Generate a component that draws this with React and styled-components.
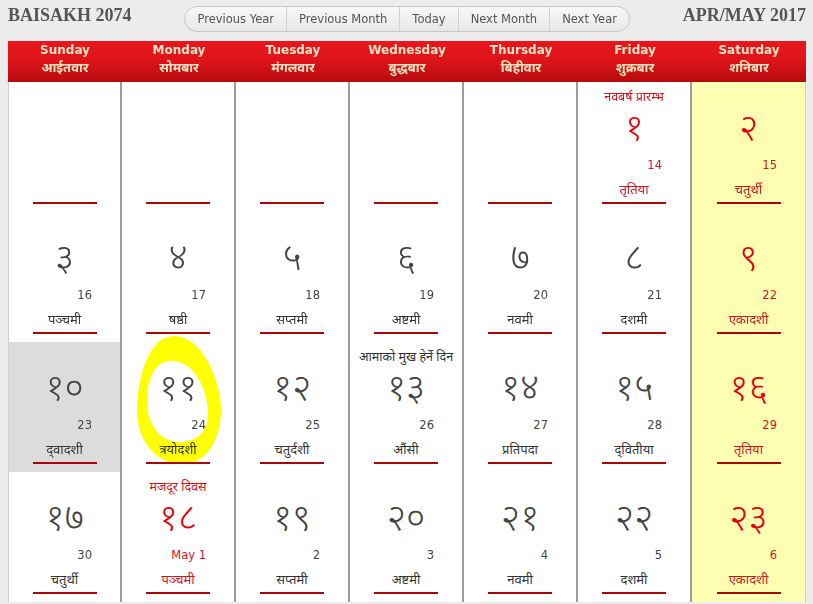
import React from 'react';
import styled, { createGlobalStyle } from 'styled-components';

const DEV = `"Noto Sans Devanagari", "Lohit Devanagari", "Mangal", "Noto Sans", sans-serif`;
const RED = '#e3000b';
const RED_TEXT = '#d0151b';

const Global = createGlobalStyle`
  html, body { margin: 0; padding: 0; background: #ececec; overflow: hidden; }
  body { font-family: "DejaVu Sans", sans-serif; }
`;

const Page = styled.div`
  width: 798px;
  margin-left: 8px;
`;

const TopBar = styled.div`
  height: 41px;
  display: flex;
  justify-content: space-between;
  align-items: flex-start;
`;

const Title = styled.h1`
  margin: 5px 0 0;
  font: bold 18px/20px "Liberation Serif", serif;
  color: #555;
`;

const BtnGroup = styled.div`
  margin-top: 6px;
  display: flex;
  height: 26px;
  box-sizing: border-box;
  border: 1px solid #c6c6c6;
  border-radius: 13px;
  overflow: hidden;
  background: linear-gradient(#f8f8f8, #e8e8e8);
`;

const NavBtn = styled.button`
  border: 0;
  border-left: 1px solid #cfcfcf;
  background: transparent;
  padding: 1px 12px 0;
  font: 11.5px/23px "DejaVu Sans", sans-serif;
  color: #555;
  cursor: pointer;
  &:first-child { border-left: 0; }
`;

const Table = styled.div`
  display: grid;
  grid-template-columns: repeat(7, 114px);
`;

const Head = styled.div`
  background: linear-gradient(#e8161d 0%, #e0141b 45%, #b60a0e 100%);
  height: 41px;
  box-sizing: border-box;
  padding-top: 2px;
  text-align: center;
  color: #fbe4bf;
  font-weight: bold;
`;

const HeadEn = styled.div`
  font: bold 12px/15px "DejaVu Sans", sans-serif;
`;

const HeadNp = styled.div`
  font: bold 13px/21px ${DEV};
`;

const Cell = styled.div`
  position: relative;
  height: 130px;
  box-sizing: border-box;
  display: flex;
  flex-direction: column;
  align-items: center;
  background: ${p => (p.$sat ? '#ffffb4' : p.$today ? '#dcdcdc' : '#ffffff')};
  border-right: 2px solid #9c9c9c;
  border-left: ${p => (p.$first ? '1px solid #cfcfcf' : '0')};
  &:nth-child(7n) { border-right: 1px solid #cfcfcf; }
`;

const Event = styled.div`
  margin-top: 8px;
  height: 16px;
  font: 12.5px/16px ${DEV};
  color: ${p => (p.$red ? RED_TEXT : '#333')};
  white-space: nowrap;
`;

const Num = styled.div`
  margin-top: 4px;
  height: 42px;
  font: 350 37px/42px ${DEV};
  color: ${p => (p.$red ? RED : '#444')};
`;

const EnDate = styled.div`
  align-self: stretch;
  margin-top: 5px;
  padding-right: 28px;
  text-align: right;
  height: 16px;
  font: 11.5px/16px "DejaVu Sans", sans-serif;
  color: ${p => (p.$red ? RED_TEXT : '#444')};
`;

const Tithi = styled.div`
  margin-top: 9px;
  height: 17px;
  font: 13px/17px ${DEV};
  color: ${p => (p.$red ? RED_TEXT : '#333')};
  white-space: nowrap;
`;

const Rule = styled.div`
  margin-top: 3px;
  width: 64px;
  height: 2px;
  background: #a80808;
`;

const Spacer = styled.div`
  flex: 1;
`;

const Circle = styled.svg`
  position: absolute;
  left: 0;
  top: 0;
  overflow: visible;
  mix-blend-mode: multiply;
  pointer-events: none;
`;

const days = [
  ['Sunday', 'आईतवार'],
  ['Monday', 'सोमबार'],
  ['Tuesday', 'मंगलवार'],
  ['Wednesday', 'बुद्धबार'],
  ['Thursday', 'बिहीवार'],
  ['Friday', 'शुक्रबार'],
  ['Saturday', 'शनिबार'],
];

const weeks = [
  [null, null, null, null, null,
    { n: '१', d: '14', t: 'तृतिया', ev: 'नवबर्ष प्रारम्भ', red: true },
    { n: '२', d: '15', t: 'चतुर्थी' }],
  [{ n: '३', d: '16', t: 'पञ्चमी' }, { n: '४', d: '17', t: 'षष्ठी' }, { n: '५', d: '18', t: 'सप्तमी' },
    { n: '६', d: '19', t: 'अष्टमी' }, { n: '७', d: '20', t: 'नवमी' }, { n: '८', d: '21', t: 'दशमी' },
    { n: '९', d: '22', t: 'एकादशी' }],
  [{ n: '१०', d: '23', t: 'द्\u200Cवादशी', today: true }, { n: '११', d: '24', t: 'त्रयोदशी', circled: true },
    { n: '१२', d: '25', t: 'चतुर्दशी' }, { n: '१३', d: '26', t: 'औंसी', ev: 'आमाको मुख हेर्ने दिन' },
    { n: '१४', d: '27', t: 'प्रतिपदा' }, { n: '१५', d: '28', t: 'द्\u200Cवितीया' }, { n: '१६', d: '29', t: 'तृतिया' }],
  [{ n: '१७', d: '30', t: 'चतुर्थी' }, { n: '१८', d: 'May 1', t: 'पञ्चमी', ev: 'मजदूर दिवस', red: true },
    { n: '१९', d: '2', t: 'सप्तमी' }, { n: '२०', d: '3', t: 'अष्टमी' }, { n: '२१', d: '4', t: 'नवमी' },
    { n: '२२', d: '5', t: 'दशमी' }, { n: '२३', d: '6', t: 'एकादशी' }],
];

function Highlight() {
  return (
    <Circle width="114" height="130" viewBox="0 0 114 130">
      <path
        fillRule="evenodd"
        fill="#ffff00"
        d="M 51 -6 C 75 -7, 93 25, 98 55 C 103 90, 88 121, 62 122 C 35 123, 15 100, 15 68 C 15 35, 27 -5, 51 -6 Z
           M 48 19 C 70 17, 86 45, 86 72 C 86 92, 72 101, 55 100 C 38 99, 25 82, 25 60 C 25 38, 32 20, 48 19 Z"
      />
    </Circle>
  );
}

function DayCell({ day, col }) {
  const sat = col === 6;
  if (!day) {
    return (
      <Cell $sat={sat} $first={col === 0}>
        <Spacer />
        <Rule style={{ marginBottom: 8 }} />
      </Cell>
    );
  }
  const red = sat || day.red;
  return (
    <Cell $sat={sat} $today={day.today} $first={col === 0}>
      <Event $red={red}>{day.ev || ''}</Event>
      <Num $red={red}>{day.n}</Num>
      <EnDate $red={red}>{day.d}</EnDate>
      <Tithi $red={red}>{day.t}</Tithi>
      <Rule />
      {day.circled && <Highlight />}
    </Cell>
  );
}

export default function App() {
  return (
    <>
      <Global />
      <Page>
        <TopBar>
          <Title>BAISAKH 2074</Title>
          <BtnGroup>
            <NavBtn>Previous Year</NavBtn>
            <NavBtn>Previous Month</NavBtn>
            <NavBtn>Today</NavBtn>
            <NavBtn>Next Month</NavBtn>
            <NavBtn>Next Year</NavBtn>
          </BtnGroup>
          <Title>APR/MAY 2017</Title>
        </TopBar>
        <Table>
          {days.map(([en, np]) => (
            <Head key={en}>
              <HeadEn>{en}</HeadEn>
              <HeadNp>{np}</HeadNp>
            </Head>
          ))}
          {weeks.map((week, wi) =>
            week.map((day, col) => <DayCell key={`${wi}-${col}`} day={day} col={col} />)
          )}
        </Table>
      </Page>
    </>
  );
}
